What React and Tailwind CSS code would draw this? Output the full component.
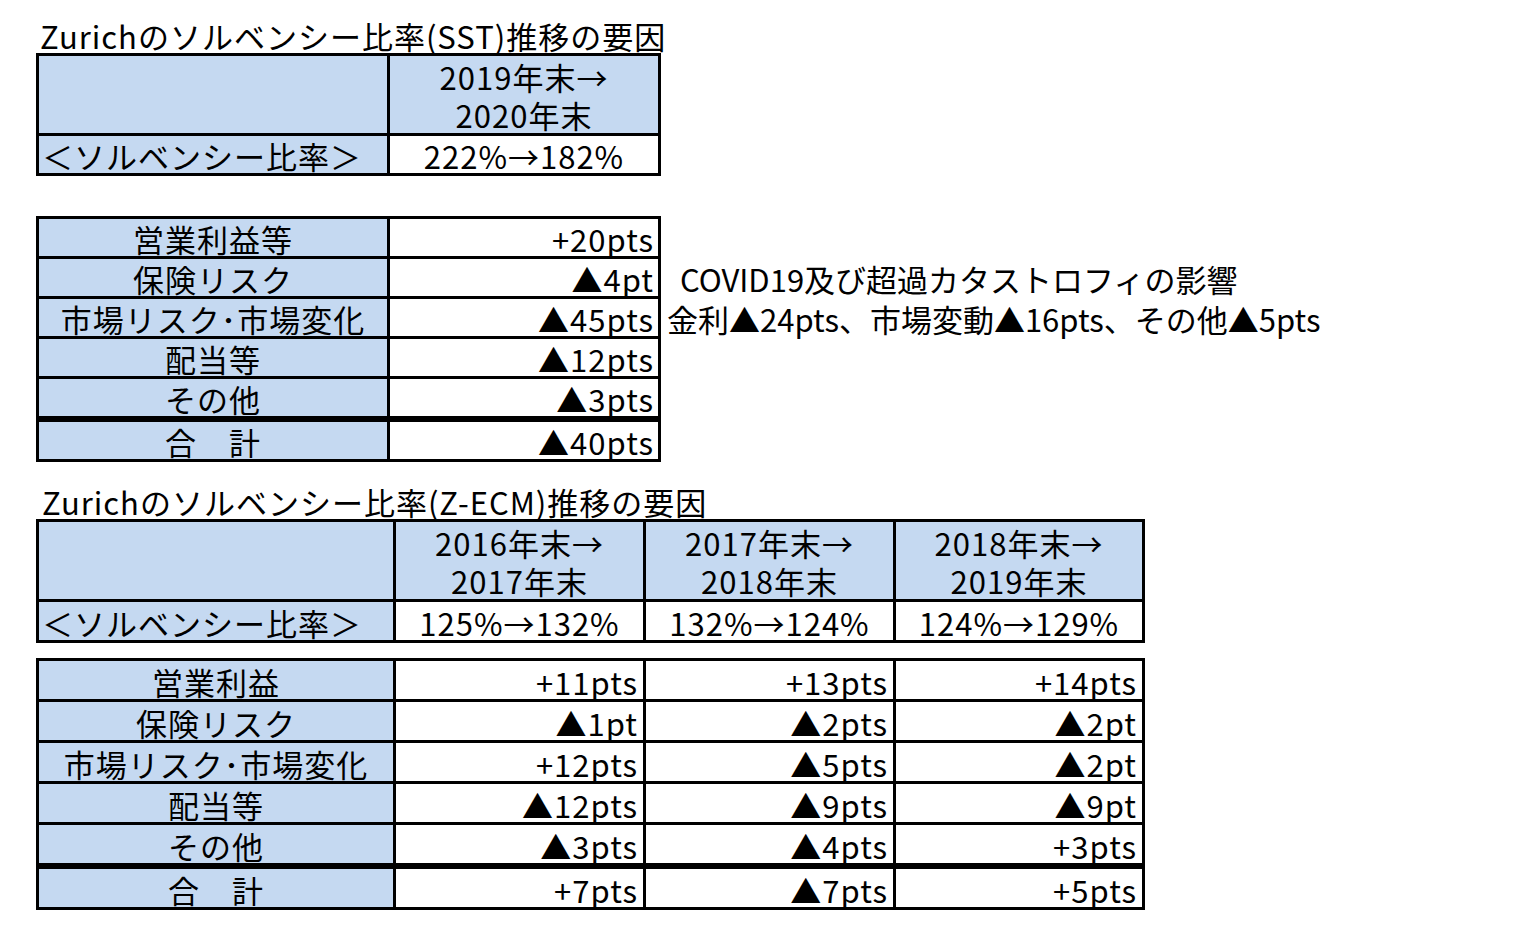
import React from 'react';

// 表のデータ
const sstRows = [
  { label: '営業利益等', value: '+20pts' },
  { label: '保険リスク', value: '▲4pt' },
  { label: '市場リスク･市場変化', value: '▲45pts' },
  { label: '配当等', value: '▲12pts' },
  { label: 'その他', value: '▲3pts' },
];

const ecmRows = [
  { label: '営業利益', values: ['+11pts', '+13pts', '+14pts'] },
  { label: '保険リスク', values: ['▲1pt', '▲2pts', '▲2pt'] },
  { label: '市場リスク･市場変化', values: ['+12pts', '▲5pts', '▲2pt'] },
  { label: '配当等', values: ['▲12pts', '▲9pts', '▲9pt'] },
  { label: 'その他', values: ['▲3pts', '▲4pts', '+3pts'] },
];

const ecmTotal = ['+7pts', '▲7pts', '+5pts'];

const ecmHeaders = [
  ['2016年末→', '2017年末', '125%→132%'],
  ['2017年末→', '2018年末', '132%→124%'],
  ['2018年末→', '2019年末', '124%→129%'],
];

function HeaderCell({ top, bottom }) {
  return (
    <div className="bg-[#c5d9f1] h-[77px] flex flex-col items-center pt-[2px]">
      <div className="leading-[38px]">{top}</div>
      <div className="leading-[38px]">{bottom}</div>
    </div>
  );
}

export default function App() {
  return (
    <div className="w-[1524px] h-[939px] bg-white pl-[36px] pt-[18px] text-black text-[31px] tracking-[1px] leading-none font-['Noto_Sans_CJK_JP','Noto_Sans',sans-serif]">
      {/* SST タイトル */}
      <div className="h-[35px] pl-[4px] flex items-end pb-[2px] whitespace-nowrap">Zurichのソルベンシー比率(SST)推移の要因</div>

      {/* SST ヘッダー表 */}
      <div className="w-[625px] grid grid-cols-[348px_268px] gap-[3px] border-[3px] border-black bg-black">
        <div className="bg-[#c5d9f1] h-[77px]"></div>
        <HeaderCell top="2019年末→" bottom="2020年末" />
        <div className="bg-[#c5d9f1] h-[37px] flex items-end pl-[3px] pb-[2px] whitespace-nowrap">＜ソルベンシー比率＞</div>
        <div className="bg-white h-[37px] flex items-end justify-center pb-[2px]">222%→182%</div>
      </div>

      {/* SST 要因表 + 注記 */}
      <div className="mt-[40px] flex">
        <div className="w-[625px] shrink-0 grid grid-cols-[348px_268px] gap-[3px] border-[3px] border-black bg-black">
          {sstRows.map((r) => (
            <React.Fragment key={r.label}>
              <div className="bg-[#c5d9f1] h-[37px] flex items-end justify-center pb-[2px] whitespace-nowrap">{r.label}</div>
              <div className="bg-white h-[37px] flex items-end justify-end pr-[4px] pb-[2px]">{r.value}</div>
            </React.Fragment>
          ))}
          <div className="bg-[#c5d9f1] h-[40px] border-t-[3px] border-black flex items-end justify-center pb-[2px]">合　計</div>
          <div className="bg-white h-[40px] border-t-[3px] border-black flex items-end justify-end pr-[4px] pb-[2px]">▲40pts</div>
        </div>
        <div className="flex flex-col pt-[43px] whitespace-nowrap tracking-normal">
          <div className="h-[37px] flex items-end pl-[19px] pb-[2px]">COVID19及び超過カタストロフィの影響</div>
          <div className="h-[40px] flex items-end pl-[6px] pb-[2px]">金利▲24pts、市場変動▲16pts、その他▲5pts</div>
        </div>
      </div>

      {/* Z-ECM タイトル */}
      <div className="mt-[22px] h-[35px] pl-[6px] flex items-end pb-[2px] whitespace-nowrap">Zurichのソルベンシー比率(Z-ECM)推移の要因</div>

      {/* Z-ECM ヘッダー表 */}
      <div className="w-[1109px] grid grid-cols-[354px_247px_247px_246px] gap-[3px] border-[3px] border-black bg-black">
        <div className="bg-[#c5d9f1] h-[77px]"></div>
        {ecmHeaders.map((h) => (
          <HeaderCell key={h[0]} top={h[0]} bottom={h[1]} />
        ))}
        <div className="bg-[#c5d9f1] h-[38px] flex items-end pl-[3px] pb-[2px] whitespace-nowrap">＜ソルベンシー比率＞</div>
        {ecmHeaders.map((h) => (
          <div key={h[2]} className="bg-white h-[38px] flex items-end justify-center pb-[2px]">{h[2]}</div>
        ))}
      </div>

      {/* Z-ECM 要因表 */}
      <div className="mt-[15px] w-[1109px] grid grid-cols-[354px_247px_247px_246px] gap-[3px] border-[3px] border-black bg-black">
        {ecmRows.map((r) => (
          <React.Fragment key={r.label}>
            <div className="bg-[#c5d9f1] h-[38px] flex items-end justify-center pb-[2px] whitespace-nowrap">{r.label}</div>
            {r.values.map((v, i) => (
              <div key={i} className="bg-white h-[38px] flex items-end justify-end pr-[5px] pb-[2px]">{v}</div>
            ))}
          </React.Fragment>
        ))}
        <div className="bg-[#c5d9f1] h-[41px] border-t-[3px] border-black flex items-end justify-center pb-[2px]">合　計</div>
        {ecmTotal.map((v, i) => (
          <div key={i} className="bg-white h-[41px] border-t-[3px] border-black flex items-end justify-end pr-[5px] pb-[2px]">{v}</div>
        ))}
      </div>
    </div>
  );
}
